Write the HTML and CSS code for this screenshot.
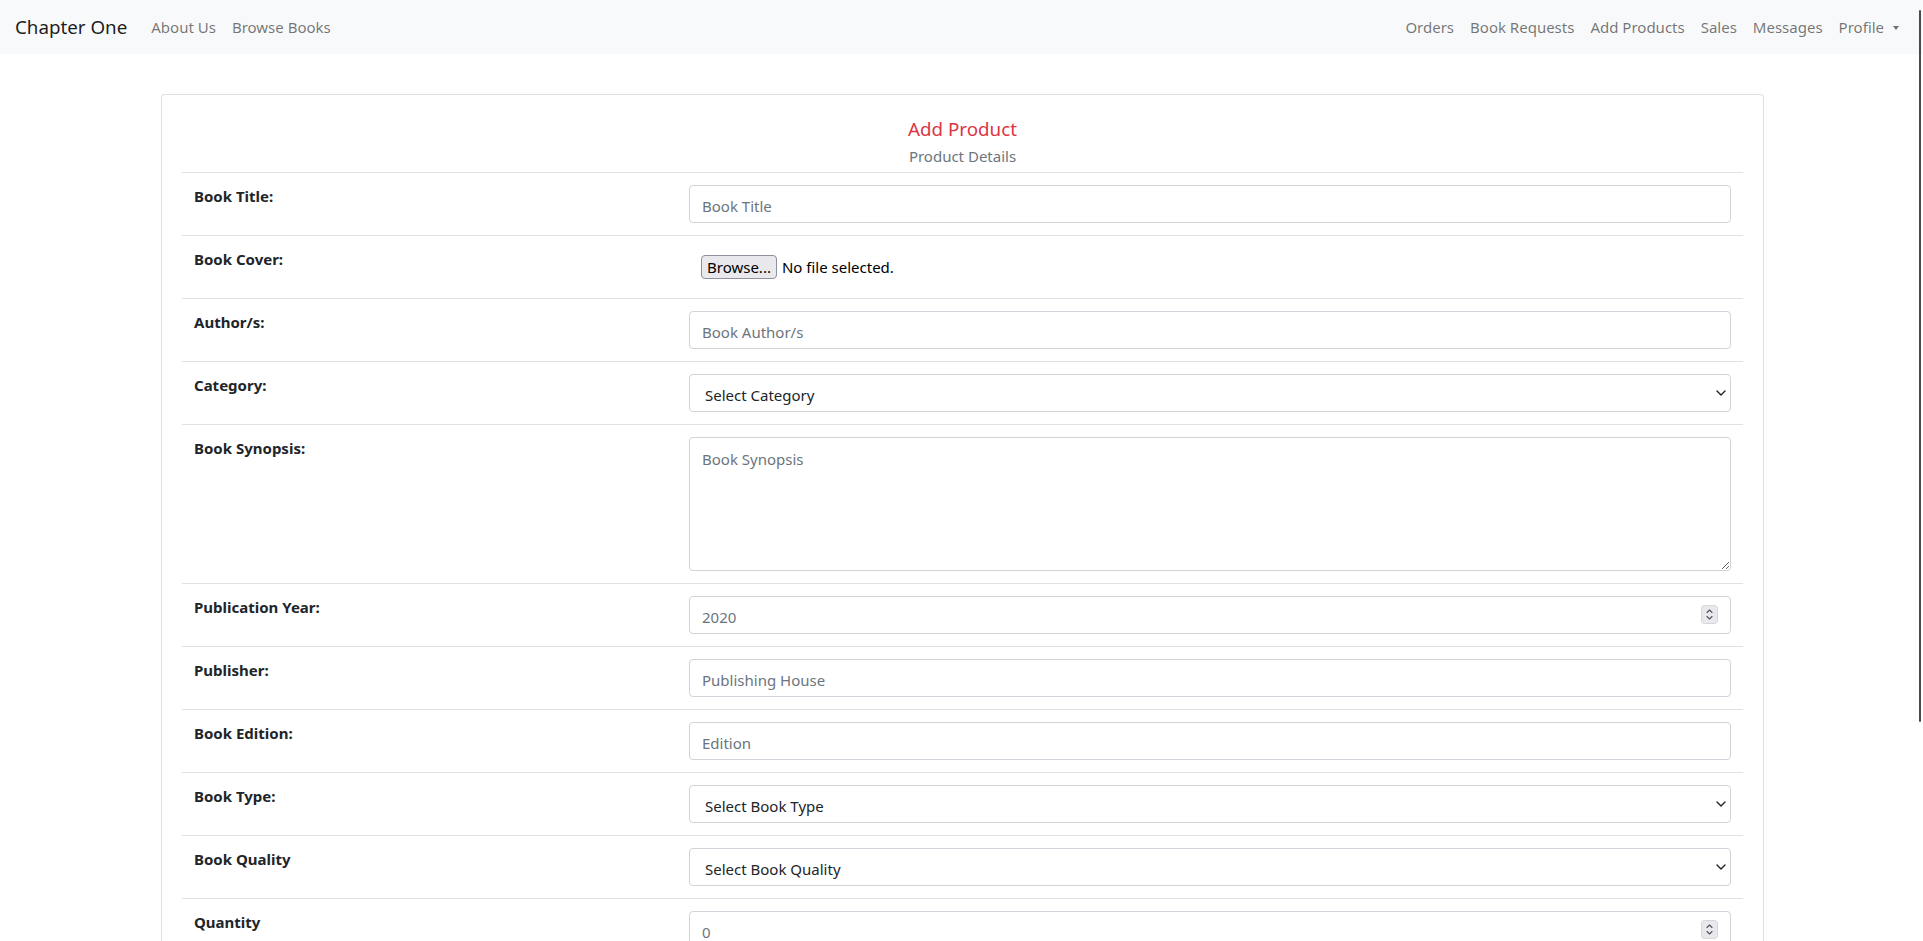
FILE: index.html
```html
<!DOCTYPE html>
<html lang="en">
<head>
<meta charset="utf-8">
<title>Chapter One - Add Product</title>
<link rel="stylesheet" href="styles.css">
</head>
<body>
<nav class="navbar">
  <a class="brand" href="#">Chapter One</a>
  <ul class="nav nav-left">
    <li><a class="nav-link" href="#">About Us</a></li>
    <li><a class="nav-link" href="#">Browse Books</a></li>
  </ul>
  <ul class="nav nav-right">
    <li><a class="nav-link" href="#">Orders</a></li>
    <li><a class="nav-link" href="#">Book Requests</a></li>
    <li><a class="nav-link" href="#">Add Products</a></li>
    <li><a class="nav-link" href="#">Sales</a></li>
    <li><a class="nav-link" href="#">Messages</a></li>
    <li><a class="nav-link dropdown-toggle" href="#">Profile</a></li>
  </ul>
</nav>
<div class="scroll-thumb" aria-hidden="true"></div>

<main class="page">
  <section class="card">
    <header class="card-head">
      <h5 class="card-title">Add Product</h5>
      <h6 class="card-subtitle">Product Details</h6>
    </header>
    <form class="form-table">
      <div class="row">
        <div class="label">Book Title:</div>
        <div class="field"><input class="control" type="text" placeholder="Book Title"></div>
      </div>
      <div class="row">
        <div class="label">Book Cover:</div>
        <div class="field">
          <div class="file-control">
            <button type="button" class="file-btn">Browse...</button>
            <span class="file-name">No file selected.</span>
          </div>
        </div>
      </div>
      <div class="row">
        <div class="label">Author/s:</div>
        <div class="field"><input class="control" type="text" placeholder="Book Author/s"></div>
      </div>
      <div class="row">
        <div class="label">Category:</div>
        <div class="field">
          <div class="select-wrap">
            <select class="control select">
              <option>Select Category</option>
            </select>
            <svg class="chevron" width="10" height="6" viewBox="0 0 10 6"><path d="M1 1l4 4 4-4" fill="none" stroke="#222" stroke-width="1.4" stroke-linecap="round" stroke-linejoin="round"/></svg>
          </div>
        </div>
      </div>
      <div class="row">
        <div class="label">Book Synopsis:</div>
        <div class="field"><textarea class="control textarea" rows="5" placeholder="Book Synopsis"></textarea></div>
      </div>
      <div class="row">
        <div class="label">Publication Year:</div>
        <div class="field">
          <div class="number-wrap">
            <input class="control" type="text" placeholder="2020">
            <svg class="spinner" width="17" height="19" viewBox="0 0 17 19"><rect x="0.5" y="0.5" width="16" height="18" rx="3" fill="#e9e9ed" stroke="#d6d6dc"/><path d="M6 7.5l2.5-2.5 2.5 2.5M6 11.5l2.5 2.5 2.5-2.5" fill="none" stroke="#555" stroke-width="1.1" stroke-linecap="round" stroke-linejoin="round"/></svg>
          </div>
        </div>
      </div>
      <div class="row">
        <div class="label">Publisher:</div>
        <div class="field"><input class="control" type="text" placeholder="Publishing House"></div>
      </div>
      <div class="row">
        <div class="label">Book Edition:</div>
        <div class="field"><input class="control" type="text" placeholder="Edition"></div>
      </div>
      <div class="row">
        <div class="label">Book Type:</div>
        <div class="field">
          <div class="select-wrap">
            <select class="control select">
              <option>Select Book Type</option>
            </select>
            <svg class="chevron" width="10" height="6" viewBox="0 0 10 6"><path d="M1 1l4 4 4-4" fill="none" stroke="#222" stroke-width="1.4" stroke-linecap="round" stroke-linejoin="round"/></svg>
          </div>
        </div>
      </div>
      <div class="row">
        <div class="label">Book Quality</div>
        <div class="field">
          <div class="select-wrap">
            <select class="control select">
              <option>Select Book Quality</option>
            </select>
            <svg class="chevron" width="10" height="6" viewBox="0 0 10 6"><path d="M1 1l4 4 4-4" fill="none" stroke="#222" stroke-width="1.4" stroke-linecap="round" stroke-linejoin="round"/></svg>
          </div>
        </div>
      </div>
      <div class="row">
        <div class="label">Quantity</div>
        <div class="field">
          <div class="number-wrap">
            <input class="control" type="text" placeholder="0">
            <svg class="spinner" width="17" height="19" viewBox="0 0 17 19"><rect x="0.5" y="0.5" width="16" height="18" rx="3" fill="#e9e9ed" stroke="#d6d6dc"/><path d="M6 7.5l2.5-2.5 2.5 2.5M6 11.5l2.5 2.5 2.5-2.5" fill="none" stroke="#555" stroke-width="1.1" stroke-linecap="round" stroke-linejoin="round"/></svg>
          </div>
        </div>
      </div>
      <div class="row">
        <div class="label">Price</div>
        <div class="field"><input class="control" type="text" placeholder="0.00"></div>
      </div>
      <div class="row row-submit">
        <button type="submit" class="btn-submit">Add Product</button>
      </div>
    </form>
  </section>
</main>
</body>
</html>
```

FILE: styles.css
```css
* { box-sizing: border-box; }

body {
  margin: 0;
  font-family: "Noto Sans", "Open Sans", sans-serif;
  font-size: 15px;
  line-height: 24px;
  color: #212529;
  background: #fff;
}

a { text-decoration: none; }

/* Thin overlay scrollbar thumb, as seen in the reference */
.scroll-thumb {
  position: fixed;
  top: 10px;
  right: 2px;
  width: 2px;
  height: 712px;
  background: #4a4a4a;
  border-radius: 1px;
  z-index: 10;
}

/* Navbar */
.navbar {
  display: flex;
  align-items: center;
  height: 54px;
  padding: 0 16px 0 15px;
  background: #f8f9fa;
}
.brand {
  font-size: 18.75px;
  line-height: 30px;
  color: rgba(0, 0, 0, 0.9);
  margin-right: 16px;
}
.nav {
  display: flex;
  list-style: none;
  margin: 0;
  padding: 0;
}
.nav-right { margin-left: auto; }
.nav-link {
  display: block;
  padding: 8px;
  color: rgba(0, 0, 0, 0.55);
  line-height: 24px;
}
.dropdown-toggle::after {
  content: "";
  display: inline-block;
  margin-left: 9px;
  vertical-align: 3px;
  border-top: 4.5px solid;
  border-right: 3.5px solid transparent;
  border-left: 3.5px solid transparent;
}

/* Page / card */
.page {
  padding: 40px 0 0 161px;
}
.card {
  width: 1603px;
  border: 1px solid rgba(0, 0, 0, 0.125);
  border-radius: 4px;
  padding: 20px;
  background: #fff;
}
.card-head {
  text-align: center;
  padding-top: 2px;
}
.card-title {
  margin: 0 0 12px;
  font-size: 18.75px;
  font-weight: 400;
  line-height: 24px;
  color: #dc3545;
}
.card-subtitle {
  margin: -6px 0 6px;
  font-size: 15px;
  font-weight: 400;
  line-height: 19px;
  color: #6c757d;
}

/* Form table */
.form-table { display: block; }
.row {
  display: grid;
  grid-template-columns: 495px 1fr;
  border-top: 1px solid #dee2e6;
}
.label {
  padding: 11px 12px 13px;
  font-weight: 700;
}
.field { padding: 12px; }

.control {
  display: block;
  width: 100%;
  height: 38px;
  padding: 7.5px 12px 4.5px;
  font-family: inherit;
  font-size: 15px;
  line-height: 24px;
  color: #495057;
  background: #fff;
  border: 1px solid #ced4da;
  border-radius: 4px;
  outline: none;
}
.control::placeholder { color: #6c757d; opacity: 1; }

.textarea {
  height: 134px;
  padding-top: 9px;
  padding-bottom: 3px;
  resize: vertical;
}

.select-wrap, .number-wrap { position: relative; }
.select {
  appearance: none;
  -webkit-appearance: none;
  padding: 8px 12px 4px 15px;
  color: #212529;
}
.chevron {
  position: absolute;
  right: 5px;
  top: 16px;
  pointer-events: none;
}
.spinner {
  position: absolute;
  right: 13px;
  top: 9px;
  pointer-events: none;
}

.file-control {
  display: flex;
  align-items: center;
  height: 38px;
  margin-left: 12px;
}
.file-btn {
  height: 24px;
  padding: 0 5px;
  font-family: inherit;
  font-size: 15px;
  line-height: 20px;
  color: #000;
  background: #e9e9ed;
  border: 1px solid #8f8f9d;
  border-radius: 4px;
}
.file-name {
  margin-left: 5px;
  font-size: 15px;
  color: #000;
}

.row-submit {
  display: flex;
  justify-content: center;
  padding: 12px;
}
.btn-submit {
  padding: 6px 12px;
  font-family: inherit;
  font-size: 15px;
  line-height: 24px;
  color: #fff;
  background: #dc3545;
  border: 1px solid #dc3545;
  border-radius: 4px;
}
```
